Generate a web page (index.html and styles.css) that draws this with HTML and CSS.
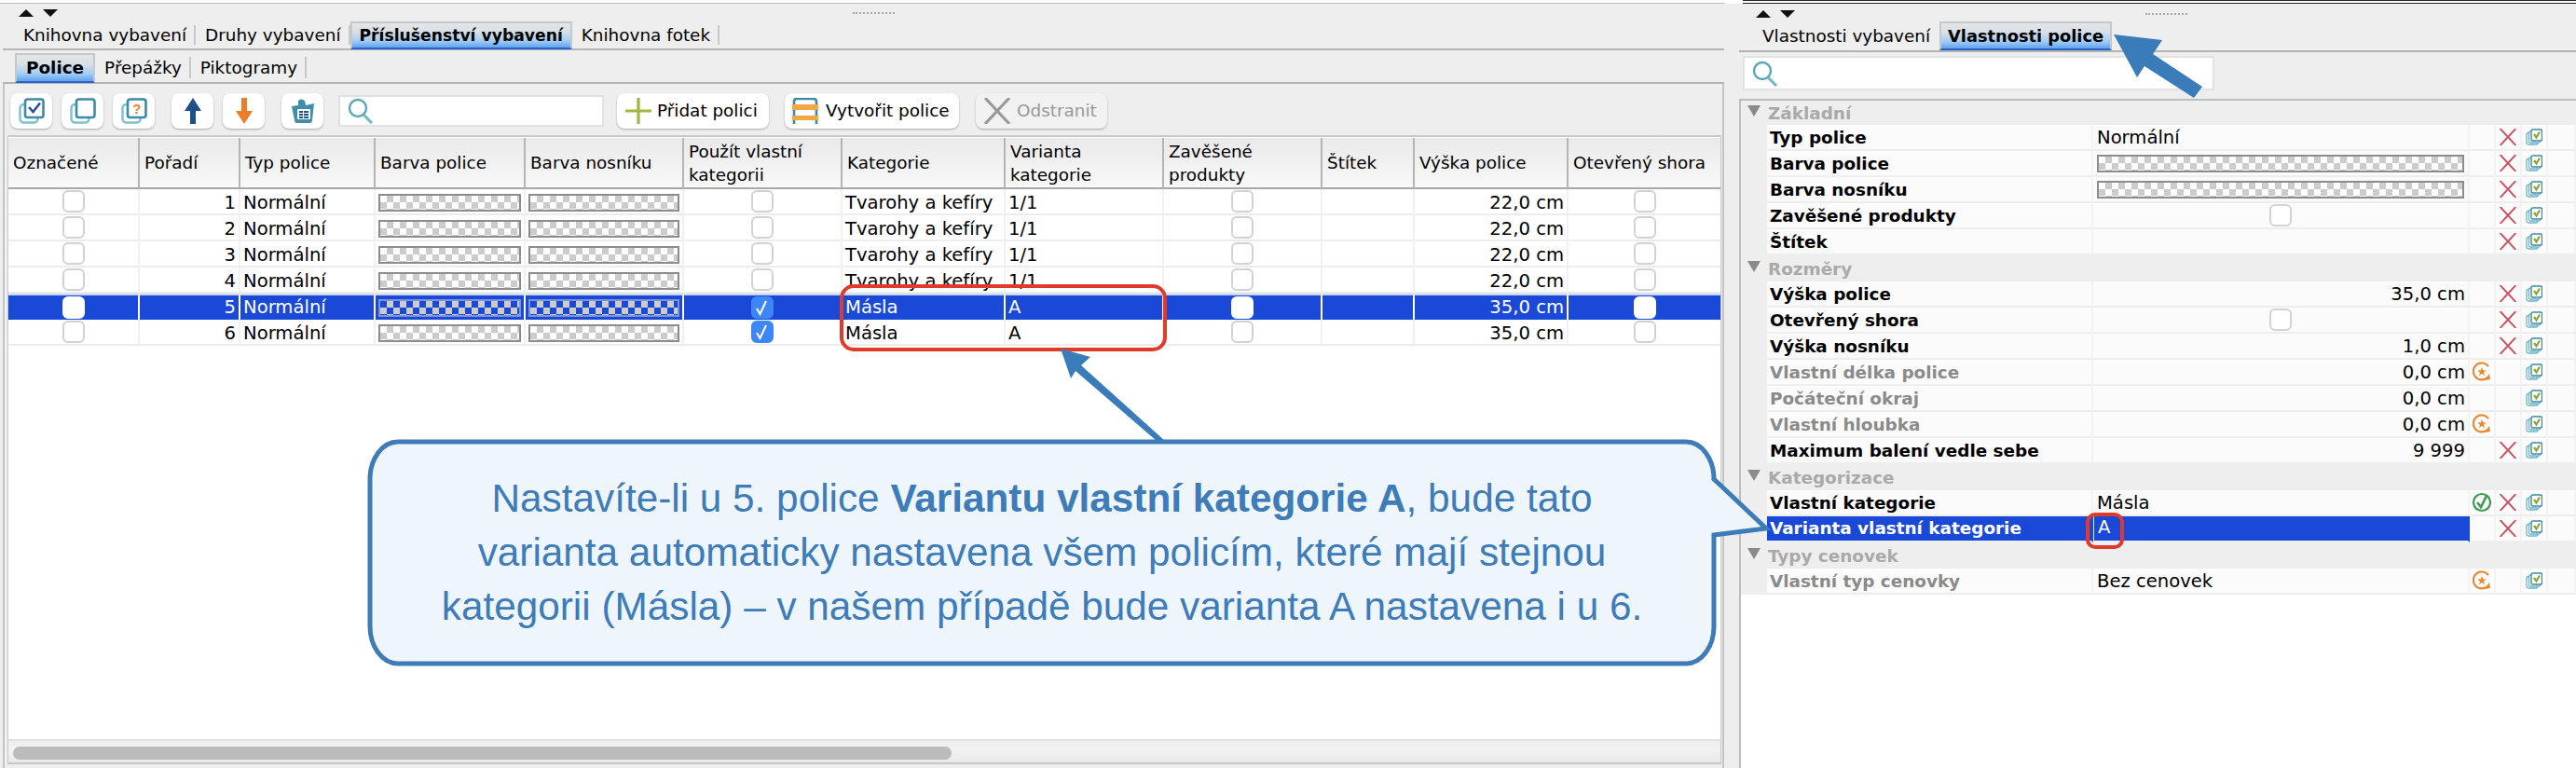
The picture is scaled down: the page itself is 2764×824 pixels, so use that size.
FILE: index.html
```html
<!DOCTYPE html>
<html lang="cs">
<head>
<meta charset="utf-8">
<title>Příslušenství vybavení</title>
<link rel="stylesheet" href="styles.css">
</head>
<body>
<svg class="defs" aria-hidden="true">
  <symbol id="stack" viewBox="0 0 28 28">
    <rect x="1.5" y="7" width="19" height="19.5" rx="4" fill="#fff" stroke="#7fc0cf" stroke-width="2.4"/>
    <rect x="7" y="1.5" width="19.5" height="19.5" rx="2.5" fill="#fff" stroke="#3d8aa6" stroke-width="2.6"/>
  </symbol>
  <symbol id="stack-tick" viewBox="0 0 28 28">
    <use href="#stack"/>
    <path d="M11 10l4.500 5 7.500-9.500" fill="none" stroke="#2a4f96" stroke-width="2.600"/>
  </symbol>
  <symbol id="up" viewBox="0 0 18 28">
    <path d="M9 0L18 14H12V28H6V14H0Z" fill="#1d4f88"/>
  </symbol>
  <symbol id="down" viewBox="0 0 18 28">
    <path d="M6 0H12V14H18L9 28L0 14H6Z" fill="#ee7d2a"/>
  </symbol>
  <symbol id="clip" viewBox="0 0 28 28">
    <path d="M2 9L9 8V3Q12 0 16 3L17 8L26 6L24 24Q24 27 21 27H8Q5 27 5 24Z" fill="#3f8eaa"/>
    <rect x="8" y="12" width="14" height="11" rx="1" fill="#fff"/>
    <path d="M10 14h4v2h-4zM15 14h5v2h-5zM10 17h4v2h-4zM15 17h5v2h-5zM10 20h4v2h-4zM15 20h5v2h-5z" fill="#24528f"/>
  </symbol>
  <symbol id="lens" viewBox="0 0 28 28">
    <circle cx="11" cy="11" r="9" fill="none" stroke="#5aa6b8" stroke-width="2.400"/>
    <path d="M17 18L26 27" stroke="#6fb6c6" stroke-width="3"/>
  </symbol>
  <symbol id="plus" viewBox="0 0 28 28">
    <path d="M0 14H28M14 0V28" stroke="#a4b63f" stroke-width="3.200"/>
  </symbol>
  <symbol id="shelf" viewBox="0 0 28 28">
    <path d="M2 28V4Q2 1 5 1H23Q26 1 26 4V28" fill="none" stroke="#3d8aa6" stroke-width="2.600"/>
    <rect x="0" y="7" width="28" height="6" fill="#f0a840"/>
    <rect x="0" y="19" width="28" height="5" fill="#f0a840"/>
  </symbol>
  <symbol id="cross" viewBox="0 0 28 28">
    <path d="M1 0L27 28M27 0L1 28" stroke="currentColor" stroke-width="3" fill="none"/>
  </symbol>
  <symbol id="copy" viewBox="0 0 18 18">
    <rect x="1" y="4.500" width="12" height="12.500" rx="2" fill="#fff" stroke="#6db4c6" stroke-width="1.300"/>
    <rect x="3.500" y="3" width="12" height="12" rx="1.500" fill="#fff" stroke="#6db4c6" stroke-width="1.300"/>
    <rect x="6" y="1" width="11.500" height="12" rx="1.500" fill="#fff" stroke="#3d8aa6" stroke-width="1.400"/>
    <path d="M9 6l2.500 3.500L15 3.500" fill="none" stroke="#8fa52f" stroke-width="2.200"/>
  </symbol>
  <symbol id="star" viewBox="0 0 20 22">
    <path d="M16 17A9 9 0 1 1 17 5" fill="none" stroke="#e88b35" stroke-width="2.200"/>
    <path d="M13 20l6-1-1-6z" fill="#e88b35"/>
    <path d="M10 6l1.300 3.300 3.300.2-2.600 2.200.9 3.300-2.900-1.900-2.900 1.900.9-3.300-2.600-2.200 3.300-.2z" fill="#e88b35"/>
  </symbol>
  <symbol id="gcheck" viewBox="0 0 20 22">
    <circle cx="10" cy="11" r="9" fill="none" stroke="#3f9a52" stroke-width="2.200"/>
    <path d="M5 11l4 5 6-12" fill="none" stroke="#3f9a52" stroke-width="2.600"/>
  </symbol>
  <symbol id="tick" viewBox="0 0 16 18">
    <path d="M3 10l3.500 6L13 2" fill="none" stroke="#fff" stroke-width="2"/>
  </symbol>
</svg>

<div class="topstrip">
  <div class="strip-left"></div>
  <div class="strip-right"></div>
</div>

<main class="app">
  <section class="left">
    <div class="splitbar">
      <span class="tri-up"></span><span class="tri-down"></span>
      <span class="grip grip-left"></span>
    </div>
    <nav class="tabs tabs-main">
      <span class="tab">Knihovna vybavení</span>
      <span class="tab">Druhy vybavení</span>
      <span class="tab active">Příslušenství vybavení</span>
      <span class="tab">Knihovna fotek</span>
    </nav>
    <nav class="tabs tabs-sub">
      <span class="tab active">Police</span>
      <span class="tab">Přepážky</span>
      <span class="tab">Piktogramy</span>
    </nav>
    <div class="panel">
      <div class="toolbar">
        <button class="tool"><svg class="ic28"><use href="#stack-tick"/></svg></button>
        <button class="tool"><svg class="ic28"><use href="#stack"/></svg></button>
        <button class="tool"><svg class="ic28" viewBox="0 0 28 28"><use href="#stack" width="28" height="28"/><text x="16.800" y="17" class="qmark">?</text></svg></button>
        <button class="tool group"><svg class="arrow"><use href="#up"/></svg></button>
        <button class="tool"><svg class="arrow"><use href="#down"/></svg></button>
        <button class="tool group"><svg class="ic28"><use href="#clip"/></svg></button>
        <div class="search search-left"><svg class="ic28"><use href="#lens"/></svg></div>
        <button class="tool add"><svg class="ic28"><use href="#plus"/></svg>Přidat polici</button>
        <button class="tool create"><svg class="ic28"><use href="#shelf"/></svg>Vytvořit police</button>
        <button class="tool remove"><svg class="ic28"><use href="#cross"/></svg>Odstranit</button>
      </div>
      <div class="frame">
        <div class="tablewrap">
          <table class="grid">
            <thead>
              <tr>
                <th>Označené</th><th>Pořadí</th><th>Typ police</th><th>Barva police</th><th>Barva nosníku</th><th>Použít vlastní kategorii</th><th>Kategorie</th><th>Varianta kategorie</th><th>Zavěšené produkty</th><th>Štítek</th><th>Výška police</th><th>Otevřený shora</th>
              </tr>
            </thead>
            <tbody>
              <tr><td class="c"><i class="cb"></i></td><td class="r">1</td><td>Normální</td><td class="s"><i class="sw"></i></td><td class="s"><i class="sw"></i></td><td class="c"><i class="cb"></i></td><td>Tvarohy a kefíry</td><td>1/1</td><td class="c"><i class="cb"></i></td><td></td><td class="r">22,0 cm</td><td class="c"><i class="cb"></i></td></tr>
              <tr><td class="c"><i class="cb"></i></td><td class="r">2</td><td>Normální</td><td class="s"><i class="sw"></i></td><td class="s"><i class="sw"></i></td><td class="c"><i class="cb"></i></td><td>Tvarohy a kefíry</td><td>1/1</td><td class="c"><i class="cb"></i></td><td></td><td class="r">22,0 cm</td><td class="c"><i class="cb"></i></td></tr>
              <tr><td class="c"><i class="cb"></i></td><td class="r">3</td><td>Normální</td><td class="s"><i class="sw"></i></td><td class="s"><i class="sw"></i></td><td class="c"><i class="cb"></i></td><td>Tvarohy a kefíry</td><td>1/1</td><td class="c"><i class="cb"></i></td><td></td><td class="r">22,0 cm</td><td class="c"><i class="cb"></i></td></tr>
              <tr><td class="c"><i class="cb"></i></td><td class="r">4</td><td>Normální</td><td class="s"><i class="sw"></i></td><td class="s"><i class="sw"></i></td><td class="c"><i class="cb"></i></td><td>Tvarohy a kefíry</td><td>1/1</td><td class="c"><i class="cb"></i></td><td></td><td class="r">22,0 cm</td><td class="c"><i class="cb"></i></td></tr>
              <tr class="sel"><td class="c"><i class="cb"></i></td><td class="r">5</td><td>Normální</td><td class="s"><i class="sw"></i></td><td class="s"><i class="sw"></i></td><td class="c"><i class="cb on"><svg class="tk"><use href="#tick"/></svg></i></td><td>Másla</td><td>A</td><td class="c"><i class="cb"></i></td><td></td><td class="r">35,0 cm</td><td class="c"><i class="cb"></i></td></tr>
              <tr><td class="c"><i class="cb"></i></td><td class="r">6</td><td>Normální</td><td class="s"><i class="sw"></i></td><td class="s"><i class="sw"></i></td><td class="c"><i class="cb on"><svg class="tk"><use href="#tick"/></svg></i></td><td>Másla</td><td>A</td><td class="c"><i class="cb"></i></td><td></td><td class="r">35,0 cm</td><td class="c"><i class="cb"></i></td></tr>
            </tbody>
          </table>
        </div>
        <div class="hscroll"><div class="thumb"></div></div>
      </div>
    </div>
  </section>

  <section class="right">
    <div class="splitbar">
      <span class="tri-up"></span><span class="tri-down"></span>
      <span class="grip grip-right"></span>
    </div>
    <nav class="tabs tabs-props">
      <span class="tab plain">Vlastnosti vybavení</span>
      <span class="tab active">Vlastnosti police</span>
    </nav>
    <div class="search search-right"><svg class="ic28"><use href="#lens"/></svg></div>
    <div class="props">
      <table class="ptable">
        <colgroup>
          <col class="k-gut"><col class="k-name"><col class="k-val"><col class="k-i"><col class="k-i"><col class="k-i"><col class="k-rest">
        </colgroup>
        <tbody>
          <tr class="grp first"><td colspan="7"><span class="tri-grp"></span>Základní</td></tr>
          <tr><td class="gut"></td><th>Typ police</th><td>Normální</td><td></td><td class="i"><svg class="x"><use href="#cross"/></svg></td><td class="i"><svg class="cp"><use href="#copy"/></svg></td><td></td></tr>
          <tr><td class="gut"></td><th>Barva police</th><td class="s"><i class="sw"></i></td><td></td><td class="i"><svg class="x"><use href="#cross"/></svg></td><td class="i"><svg class="cp"><use href="#copy"/></svg></td><td></td></tr>
          <tr><td class="gut"></td><th>Barva nosníku</th><td class="s"><i class="sw"></i></td><td></td><td class="i"><svg class="x"><use href="#cross"/></svg></td><td class="i"><svg class="cp"><use href="#copy"/></svg></td><td></td></tr>
          <tr><td class="gut"></td><th>Zavěšené produkty</th><td class="c"><i class="cb"></i></td><td></td><td class="i"><svg class="x"><use href="#cross"/></svg></td><td class="i"><svg class="cp"><use href="#copy"/></svg></td><td></td></tr>
          <tr><td class="gut"></td><th>Štítek</th><td></td><td></td><td class="i"><svg class="x"><use href="#cross"/></svg></td><td class="i"><svg class="cp"><use href="#copy"/></svg></td><td></td></tr>
          <tr class="grp"><td colspan="7"><span class="tri-grp"></span>Rozměry</td></tr>
          <tr><td class="gut"></td><th>Výška police</th><td class="r">35,0 cm</td><td></td><td class="i"><svg class="x"><use href="#cross"/></svg></td><td class="i"><svg class="cp"><use href="#copy"/></svg></td><td></td></tr>
          <tr><td class="gut"></td><th>Otevřený shora</th><td class="c"><i class="cb"></i></td><td></td><td class="i"><svg class="x"><use href="#cross"/></svg></td><td class="i"><svg class="cp"><use href="#copy"/></svg></td><td></td></tr>
          <tr><td class="gut"></td><th>Výška nosníku</th><td class="r">1,0 cm</td><td></td><td class="i"><svg class="x"><use href="#cross"/></svg></td><td class="i"><svg class="cp"><use href="#copy"/></svg></td><td></td></tr>
          <tr class="dim"><td class="gut"></td><th>Vlastní délka police</th><td class="r">0,0 cm</td><td class="i"><svg class="st"><use href="#star"/></svg></td><td></td><td class="i"><svg class="cp"><use href="#copy"/></svg></td><td></td></tr>
          <tr class="dim"><td class="gut"></td><th>Počáteční okraj</th><td class="r">0,0 cm</td><td></td><td></td><td class="i"><svg class="cp"><use href="#copy"/></svg></td><td></td></tr>
          <tr class="dim"><td class="gut"></td><th>Vlastní hloubka</th><td class="r">0,0 cm</td><td class="i"><svg class="st"><use href="#star"/></svg></td><td></td><td class="i"><svg class="cp"><use href="#copy"/></svg></td><td></td></tr>
          <tr><td class="gut"></td><th>Maximum balení vedle sebe</th><td class="r">9 999</td><td></td><td class="i"><svg class="x"><use href="#cross"/></svg></td><td class="i"><svg class="cp"><use href="#copy"/></svg></td><td></td></tr>
          <tr class="grp"><td colspan="7"><span class="tri-grp"></span>Kategorizace</td></tr>
          <tr><td class="gut"></td><th>Vlastní kategorie</th><td>Másla</td><td class="i"><svg class="st"><use href="#gcheck"/></svg></td><td class="i"><svg class="x"><use href="#cross"/></svg></td><td class="i"><svg class="cp"><use href="#copy"/></svg></td><td></td></tr>
          <tr class="sel"><td class="gut"></td><th>Varianta vlastní kategorie</th><td><span class="edit">A</span></td><td class="plainc"></td><td class="i plainc"><svg class="x"><use href="#cross"/></svg></td><td class="i plainc"><svg class="cp"><use href="#copy"/></svg></td><td class="plainc"></td></tr>
          <tr class="grp"><td colspan="7"><span class="tri-grp"></span>Typy cenovek</td></tr>
          <tr class="dim"><td class="gut"></td><th>Vlastní typ cenovky</th><td>Bez cenovek</td><td class="i"><svg class="st"><use href="#star"/></svg></td><td></td><td class="i"><svg class="cp"><use href="#copy"/></svg></td><td></td></tr>
        </tbody>
      </table>
    </div>
  </section>
</main>

<svg class="notes" viewBox="0 0 2764 824" aria-hidden="true">
  <rect class="red" x="903" y="307" width="347" height="68" rx="13"/>
  <rect class="red" x="2240" y="552" width="37" height="35" rx="8"/>
  <path class="big" d="M2268 37L2320 43L2310 58L2363 93L2354 105L2301 71L2293 83Z"/>
  <path class="big" d="M1138 374L1170 383L1160 392L1250 473L1241 473L1154 398L1149 406Z"/>
  <path class="bubble" d="M427 474H1809A30 40 0 0 1 1839 514L1895 567L1839 574V672A30 40 0 0 1 1809 712H427A30 40 0 0 1 397 672V514A30 40 0 0 1 427 474Z"/>
</svg>
<p class="bubble-text">Nastavíte-li u 5. police <b>Variantu vlastní kategorie A</b>, bude tato<br>varianta automaticky nastavena všem policím, které mají stejnou<br>kategorii (Másla) – v našem případě bude varianta A nastavena i u 6.</p>
</body>
</html>
```
FILE: styles.css
```css
* { box-sizing: border-box; }
html, body { margin: 0; padding: 0; }
body {
  position: relative;
  width: 2764px;
  height: 824px;
  overflow: hidden;
  background: #eeeeee;
  color: #000;
  font: 18.4px/24px "DejaVu Sans", sans-serif;
}
.defs { position: absolute; width: 0; height: 0; }
.qmark { font: bold 15px "Liberation Sans", sans-serif; fill: #e8842c; text-anchor: middle; }

.topstrip { display: flex; height: 4px; background: #fff; }
.strip-left { width: 1850px; border-bottom: 1px solid #bbb; }
.strip-right { flex: 1; margin-left: 20px; border-top: 1px solid #222; border-bottom: 1px solid #222; }

.app { display: flex; height: 820px; }
.left { display: flex; flex-direction: column; width: 1847px; margin-left: 3px; }
.right { display: flex; flex-direction: column; flex: 1; margin-left: 16px; }

.splitbar { display: flex; align-items: center; gap: 10px; height: 19px; padding-left: 17px; }
.right .splitbar { padding-left: 18px; padding-top: 3px; }
.tri-up, .tri-down { width: 0; height: 0; border-left: 8px solid transparent; border-right: 8px solid transparent; }
.tri-up { border-bottom: 8px solid #111; }
.tri-down { border-top: 8px solid #111; }
.grip { width: 45px; border-top: 2px dotted #aaa; }
.grip-left { margin-left: 843px; }
.grip-right { margin-left: 366px; }

.tabs { display: flex; align-items: stretch; border-bottom: 2px solid #b4b4b4; }
.tab { display: flex; align-items: center; padding: 0 10px; position: relative; white-space: nowrap; }
.tab::after { content: ""; position: absolute; right: 0; top: 4px; bottom: 4px; width: 2px; background: #c8c8c8; }
.tab.active {
  font-weight: bold;
  border: 2px solid #c4c8cc;
  border-bottom: 2px solid #2a63c8;
  background: linear-gradient(#e4e5e6 0%, #d9e0e6 35%, #a4ccf4 72%, #5fa4f2 100%);
}
.tab.active::after, .tab.plain::after { display: none; }
.tabs-main { height: 31px; padding-left: 12px; }
.tabs-main .tab.active { margin-bottom: -1px; padding: 0 8px; font-size: 17.2px; }
.tabs-sub { height: 36px; padding: 3px 0 0 13px; }
.tabs-sub .tab.active { margin-bottom: -1px; }
.tabs-props { height: 33px; padding-left: 15px; }
.tabs-props .tab.active { padding: 0 7px; font-size: 17.8px; }

.panel {
  display: flex;
  flex-direction: column;
  flex: 1;
  border-left: 2px solid #c4c4c4;
  border-right: 2px solid #c4c4c4;
  padding: 10px 0 0 3px;
  min-height: 0;
}
.toolbar { display: flex; align-items: center; gap: 10px; height: 38px; padding-left: 3px; }
.tool {
  display: flex;
  align-items: center;
  justify-content: center;
  gap: 6px;
  flex: none;
  width: 45px;
  height: 38px;
  padding: 0;
  border: 0;
  border-radius: 8px;
  background: #fff;
  box-shadow: 0 1px 2px rgba(0,0,0,.3);
  font: inherit;
  color: #000;
  white-space: nowrap;
}
.tool.group { margin-left: 8px; }
.tool.add { justify-content: flex-start; width: 163px; margin-left: 4px; padding-left: 9px; }
.tool.create { justify-content: flex-start; width: 187px; margin-left: 7px; padding-left: 8px; gap: 8px; }
.tool.remove { justify-content: flex-start; width: 141px; margin-left: 8px; padding-left: 9px; gap: 7px; background: #f2f2f2; color: #999; }
.ic28 { width: 28px; height: 28px; flex: none; }
.arrow { width: 18px; height: 28px; }
.search { display: flex; align-items: center; background: #fff; border: 2px solid #e2e2e2; padding-left: 8px; }
.search-left { width: 285px; height: 34px; margin-left: 6px; }
.search-right { width: 506px; height: 37px; margin: 4px 0 9px 4px; }

.frame {
  display: flex;
  flex-direction: column;
  flex: 1;
  width: 1839px;
  margin: 7px 0 4px;
  border: 1px solid #c8c8c8;
  border-width: 2px 1px 2px 1px;
  min-height: 0;
}
.tablewrap { flex: 1; background: #fff; padding-top: 1px; }
.grid { table-layout: fixed; width: 1837px; border-collapse: separate; border-spacing: 0; }
.grid th {
  height: 55px;
  padding: 0 5px;
  font-weight: normal;
  text-align: left;
  background: linear-gradient(#e9e9e9, #f9f9f9);
  border-right: 2px solid #b4b4b4;
  border-bottom: 2px solid #a8a8a8;
  line-height: 25px;
}
.grid th:last-child { border-right: 0; }
.grid th:nth-child(1) { width: 141px; }
.grid th:nth-child(2) { width: 108px; }
.grid th:nth-child(3) { width: 145px; }
.grid th:nth-child(4) { width: 161px; }
.grid th:nth-child(5) { width: 170px; }
.grid th:nth-child(6) { width: 170px; }
.grid th:nth-child(7) { width: 175px; }
.grid th:nth-child(8) { width: 170px; }
.grid th:nth-child(9) { width: 170px; }
.grid th:nth-child(10) { width: 99px; }
.grid th:nth-child(11) { width: 165px; }
.grid th:nth-child(12) { width: 163px; }
.grid td {
  height: 28px;
  padding: 4px 3px 0;
  font-size: 19.6px;
  line-height: 20px;
  border-right: 2px solid #f1f1f1;
  border-bottom: 2px solid #ececec;
  white-space: nowrap;
  overflow: hidden;
}
.grid td:last-child { border-right: 0; }
.grid tr.sel td { background: #1a49d8; color: #fff; border-right-color: #fff; border-top: 2px solid #c9d4f4; border-bottom: 0; padding-top: 0; }
.grid tr.sel td:last-child { border-right: 0; }
.c { text-align: center; }
.r { text-align: right; }
.grid td.c, .grid td.s { padding-top: 0; }

.cb {
  display: inline-block;
  width: 24px;
  height: 24px;
  vertical-align: middle;
  background: #fff;
  border: 2px solid #d2d2d2;
  border-radius: 6px;
}
.cb.on { background: #3d86f6; border-color: #3d86f6; }
.sel .cb { border-color: #fff; }
.sel .cb.on { border-color: #3d86f6; }
.tk { display: block; width: 16px; height: 18px; margin: 1px; }
.sw {
  display: block;
  height: 19px;
  margin-top: 2px;
  border: 2px solid #8c8c8c;
  background: repeating-conic-gradient(#ccc 0 25%, #fff 0 50%) 0 0 / 14px 14px;
}
.sel .sw {
  margin-top: 0;
  border-color: #7f93d8;
  background: repeating-conic-gradient(#ccc 0 25%, #1a49d8 0 50%) 0 0 / 14px 14px;
}
.hscroll { height: 25px; background: linear-gradient(#eeeeee, #f2f2f2 40%, #e9e9e9); border-top: 2px solid #e2e2e2; padding: 6px 0 0 5px; }
.thumb { width: 1007px; height: 14px; border-radius: 7px; background: #bbbbbb; }

.props {
  flex: 1;
  background: #fff;
  border-top: 2px solid #bdbdbd;
  border-left: 2px solid #bdbdbd;
}
.ptable { table-layout: fixed; width: 896px; border-collapse: separate; border-spacing: 0; }
.k-gut { width: 28px; }
.k-name { width: 350px; }
.k-val { width: 404px; }
.k-i { width: 28px; }
.k-rest { width: 30px; }
.ptable td, .ptable th {
  height: 28px;
  padding: 2px 4px 0;
  font-size: 19.6px;
  border-bottom: 2px solid #eeeeee;
  border-right: 2px solid #f3f3f3;
  background: #fbfbfb;
  white-space: nowrap;
  overflow: hidden;
}
.ptable th { text-align: left; font-weight: bold; font-size: 18.4px; padding-left: 3px; }
.ptable td.r { padding-right: 3px; }
.ptable td.c, .ptable td.s { padding-top: 0; }
.ptable .sw { margin-top: 1px; }
.ptable .grp td {
  height: 28px;
  padding: 2px 0 0 7px;
  font-size: 18.4px;
  background: #eeeeee;
  border: 0;
  color: #a9a9a9;
  font-weight: bold;
}
.ptable .grp.first td { height: 26px; }
.tri-grp {
  display: inline-block;
  width: 0;
  height: 0;
  margin-right: 8px;
  vertical-align: 3px;
  border-left: 7px solid transparent;
  border-right: 7px solid transparent;
  border-top: 12px solid #8a8a8a;
}
.ptable td.gut { background: #eeeeee; border-right: 0; padding: 0; }
.ptable .dim th { color: #8a8a8a; }
.ptable .i { padding: 0; text-align: center; vertical-align: middle; line-height: 0; }
.x { width: 18px; height: 18px; color: #c9505f; }
.cp { width: 18px; height: 18px; }
.st { width: 20px; height: 22px; }
.ptable tr.sel th, .ptable tr.sel td { background: #1a49d8; color: #fff; border-right-color: #1a49d8; padding-top: 0; }
.ptable tr.sel td.gut { background: #eeeeee; }
.ptable tr.sel td.plainc { background: #fbfbfb; border-right-color: #f3f3f3; }
.edit { display: block; height: 26px; margin-left: -4px; padding-left: 4px; border-left: 1px solid #dfe6fb; }

.notes { position: absolute; left: 0; top: 0; width: 2764px; height: 824px; pointer-events: none; }
.red { fill: none; stroke: #e03a2c; stroke-width: 4; }
.big { fill: #3a7cba; }
.bubble { fill: #eef5fb; stroke: #3d7cb9; stroke-width: 5; }
.bubble-text {
  position: absolute;
  left: 397px;
  top: 474px;
  width: 1442px;
  height: 238px;
  margin: 0;
  padding-top: 32px;
  text-align: center;
  font: 42.3px/58px "Liberation Sans", sans-serif;
  color: #3d7cb9;
}
```
